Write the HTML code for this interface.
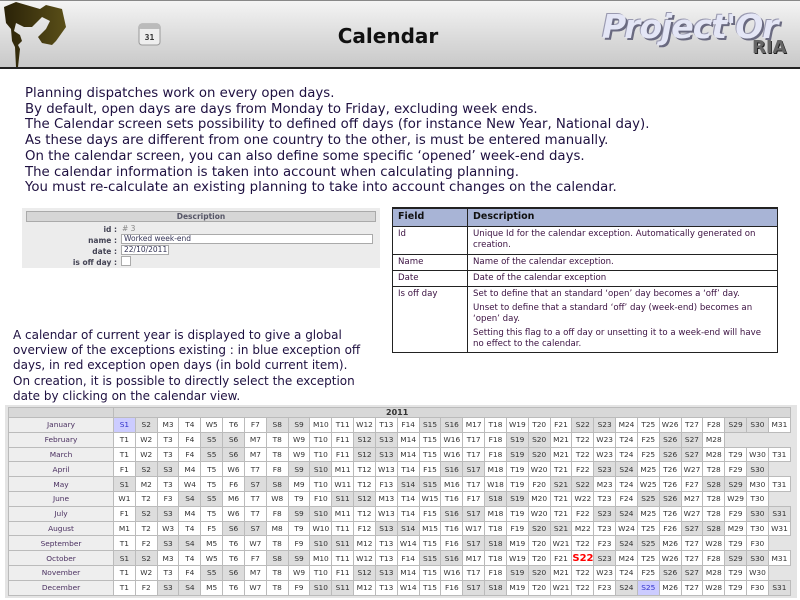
<!DOCTYPE html>
<html><head><meta charset="utf-8"><style>
*{margin:0;padding:0;box-sizing:border-box}
body{width:800px;height:600px;background:#fff;position:relative;overflow:hidden;font-family:"DejaVu Sans","Liberation Sans",sans-serif;color:#1e1040}
#hdr{position:absolute;left:0;top:0;width:800px;height:69px;background:linear-gradient(#f4f4f4,#d9d9d9 60%,#c9c9c9);border-top:1px solid #888;border-bottom:2px solid #222}
#title{position:absolute;left:300px;width:176px;top:23px;text-align:center;font:bold 20px "DejaVu Sans",sans-serif;color:#111}
#logo{position:absolute;left:602px;top:6px;font:italic bold 33px "DejaVu Sans",sans-serif;color:#e4e6f6;text-shadow:2px 2px 0 #6a6a80,-1px -1px 0 #9a9ab0;letter-spacing:-1px}
#ria{position:absolute;left:752px;top:36px;font:bold 18px "DejaVu Sans",sans-serif;color:#666;text-shadow:1px 1px 0 #222}
.p{position:absolute;white-space:pre;font-size:13.3px;line-height:15.7px}
#form{position:absolute;left:22px;top:208px;width:358px;height:60px;background:#ececec}
#form .h{position:absolute;left:4px;top:3px;width:350px;height:11px;background:#d6d6d6;border:1px solid #aaa;font:bold 7.5px "DejaVu Sans",sans-serif;color:#556;text-align:center;line-height:9px}
.lb{position:absolute;left:0;width:95px;font:bold 7.5px "DejaVu Sans",sans-serif;color:#445;text-align:right;white-space:nowrap}
.in{position:absolute;left:99px;height:10px;background:#fff;border:1px solid #aaa;font:7.5px "DejaVu Sans",sans-serif;color:#335;line-height:8px;padding-left:2px}
#ft{position:absolute;left:392px;top:207px;width:386px;border-collapse:collapse;font-size:8.6px;color:#3a1040}
#ft td{border:1px solid #222;vertical-align:top;padding:2px 5px;line-height:11px}
#ft tr.h td{background:#a8b4d6;font-weight:bold;color:#111;height:18px;font-size:9.5px;border-width:2px 1px 1px 1px}
#cal{position:absolute;left:5px;top:405px;width:792px;height:193px;background:#e4e4e4}
#ct{position:absolute;left:3px;top:2px;border-collapse:collapse;table-layout:fixed;width:783px;font-size:7.4px;color:#333}
#ct td{border:1px solid #bbb;height:14.8px;text-align:center;background:#fff;padding:0;white-space:nowrap}
#ct td.m{background:#eee;color:#4a3060;width:105px}
#ct td.w{background:#ddd}
#ct td.b{background:#ccccff;color:#33c}
#ct td.r{color:#f00;font-weight:bold;font-size:10px}
#ct td.e{background:#e4e4e4;border:none}
#ct tr.yh td{height:10px;background:#d8d8d8;font-weight:bold;font-size:8px;text-align:center;color:#333}
</style></head><body>
<div id="hdr">
<svg style="position:absolute;left:2px;top:0" width="68" height="68" viewBox="0 0 68 68"><defs><linearGradient id="g" x1="0" x2="1"><stop offset="0" stop-color="#2a2208"/><stop offset="1" stop-color="#5a4f18"/></linearGradient></defs><path d="M2 6 L14 1 L38 8 L44 4 L60 8 L64 26 L54 40 L50 44 L40 42 L36 36 L44 28 L48 20 L40 16 L34 22 L30 26 L22 26 L14 22 L12 30 L18 34 L20 40 L16 44 L18 48 L16 66 L14 66 L13 46 L10 40 L9 28 L4 22 Z" fill="url(#g)"/></svg>
<svg style="position:absolute;left:138px;top:22px" width="24" height="24" viewBox="0 0 24 24"><rect x="1" y="1" width="21" height="21" rx="3" fill="#eee" stroke="#999"/><rect x="1" y="1" width="21" height="5" rx="2" fill="#bbb"/><text x="11.5" y="17" font-size="8" font-weight="bold" text-anchor="middle" font-family="DejaVu Sans Mono,monospace" fill="#333">31</text></svg>
<div id="title">Calendar</div>
<div id="logo">Project'Or</div><div id="ria">RIA</div>
</div>
<div class="p" style="left:25px;top:86px">Planning dispatches work on every open days.
By default, open days are days from Monday to Friday, excluding week ends.
The Calendar screen sets possibility to defined off days (for instance New Year, National day).
As these days are different from one country to the other, is must be entered manually.
On the calendar screen, you can also define some specific ‘opened’ week-end days.
The calendar information is taken into account when calculating planning.
You must re-calculate an existing planning to take into account changes on the calendar.</div>
<div id="form"><div class="h">Description</div>
<div class="lb" style="top:17px">id :</div><div style="position:absolute;left:100px;top:16px;font-size:7.5px;color:#888"># 3</div>
<div class="lb" style="top:28px">name :</div><div class="in" style="top:26px;width:252px">Worked week-end</div>
<div class="lb" style="top:39px">date :</div><div class="in" style="top:37px;width:48px">22/10/2011</div>
<div class="lb" style="top:50px">is off day :</div><div class="in" style="top:48px;width:10px"></div>
</div>
<table id="ft">
<tr class="h"><td style="width:75px">Field</td><td>Description</td></tr>
<tr><td style="height:28px">Id</td><td>Unique Id for the calendar exception. Automatically generated on creation.</td></tr>
<tr><td>Name</td><td>Name of the calendar exception.</td></tr>
<tr><td>Date</td><td>Date of the calendar exception</td></tr>
<tr><td>Is off day</td><td><div style="margin-bottom:3px">Set to define that an standard ‘open’ day becomes a ‘off’ day.</div><div style="margin-bottom:3px">Unset to define that a standard ‘off’ day (week-end) becomes an ‘open’ day.</div><div>Setting this flag to a off day or unsetting it to a week-end will have no effect to the calendar.</div></td></tr>
</table>
<div class="p" style="left:13px;top:328px;font-size:12px;line-height:15.2px">A calendar of current year is displayed to give a global
overview of the exceptions existing : in blue exception off
days, in red exception open days (in bold current item).
On creation, it is possible to directly select the exception
date by clicking on the calendar view.</div>
<div id="cal"><table id="ct">
<tr class="yh"><td class="m" style="background:#d8d8d8;border-right:none"></td><td colspan="31" style="text-align:left;padding-left:272px">2011</td></tr>
<tr><td class="m">January</td><td class="b">S1</td><td class="w">S2</td><td>M3</td><td>T4</td><td>W5</td><td>T6</td><td>F7</td><td class="w">S8</td><td class="w">S9</td><td>M10</td><td>T11</td><td>W12</td><td>T13</td><td>F14</td><td class="w">S15</td><td class="w">S16</td><td>M17</td><td>T18</td><td>W19</td><td>T20</td><td>F21</td><td class="w">S22</td><td class="w">S23</td><td>M24</td><td>T25</td><td>W26</td><td>T27</td><td>F28</td><td class="w">S29</td><td class="w">S30</td><td>M31</td></tr>
<tr><td class="m">February</td><td>T1</td><td>W2</td><td>T3</td><td>F4</td><td class="w">S5</td><td class="w">S6</td><td>M7</td><td>T8</td><td>W9</td><td>T10</td><td>F11</td><td class="w">S12</td><td class="w">S13</td><td>M14</td><td>T15</td><td>W16</td><td>T17</td><td>F18</td><td class="w">S19</td><td class="w">S20</td><td>M21</td><td>T22</td><td>W23</td><td>T24</td><td>F25</td><td class="w">S26</td><td class="w">S27</td><td>M28</td><td class="e"></td><td class="e"></td><td class="e"></td></tr>
<tr><td class="m">March</td><td>T1</td><td>W2</td><td>T3</td><td>F4</td><td class="w">S5</td><td class="w">S6</td><td>M7</td><td>T8</td><td>W9</td><td>T10</td><td>F11</td><td class="w">S12</td><td class="w">S13</td><td>M14</td><td>T15</td><td>W16</td><td>T17</td><td>F18</td><td class="w">S19</td><td class="w">S20</td><td>M21</td><td>T22</td><td>W23</td><td>T24</td><td>F25</td><td class="w">S26</td><td class="w">S27</td><td>M28</td><td>T29</td><td>W30</td><td>T31</td></tr>
<tr><td class="m">April</td><td>F1</td><td class="w">S2</td><td class="w">S3</td><td>M4</td><td>T5</td><td>W6</td><td>T7</td><td>F8</td><td class="w">S9</td><td class="w">S10</td><td>M11</td><td>T12</td><td>W13</td><td>T14</td><td>F15</td><td class="w">S16</td><td class="w">S17</td><td>M18</td><td>T19</td><td>W20</td><td>T21</td><td>F22</td><td class="w">S23</td><td class="w">S24</td><td>M25</td><td>T26</td><td>W27</td><td>T28</td><td>F29</td><td class="w">S30</td><td class="e"></td></tr>
<tr><td class="m">May</td><td class="w">S1</td><td>M2</td><td>T3</td><td>W4</td><td>T5</td><td>F6</td><td class="w">S7</td><td class="w">S8</td><td>M9</td><td>T10</td><td>W11</td><td>T12</td><td>F13</td><td class="w">S14</td><td class="w">S15</td><td>M16</td><td>T17</td><td>W18</td><td>T19</td><td>F20</td><td class="w">S21</td><td class="w">S22</td><td>M23</td><td>T24</td><td>W25</td><td>T26</td><td>F27</td><td class="w">S28</td><td class="w">S29</td><td>M30</td><td>T31</td></tr>
<tr><td class="m">June</td><td>W1</td><td>T2</td><td>F3</td><td class="w">S4</td><td class="w">S5</td><td>M6</td><td>T7</td><td>W8</td><td>T9</td><td>F10</td><td class="w">S11</td><td class="w">S12</td><td>M13</td><td>T14</td><td>W15</td><td>T16</td><td>F17</td><td class="w">S18</td><td class="w">S19</td><td>M20</td><td>T21</td><td>W22</td><td>T23</td><td>F24</td><td class="w">S25</td><td class="w">S26</td><td>M27</td><td>T28</td><td>W29</td><td>T30</td><td class="e"></td></tr>
<tr><td class="m">July</td><td>F1</td><td class="w">S2</td><td class="w">S3</td><td>M4</td><td>T5</td><td>W6</td><td>T7</td><td>F8</td><td class="w">S9</td><td class="w">S10</td><td>M11</td><td>T12</td><td>W13</td><td>T14</td><td>F15</td><td class="w">S16</td><td class="w">S17</td><td>M18</td><td>T19</td><td>W20</td><td>T21</td><td>F22</td><td class="w">S23</td><td class="w">S24</td><td>M25</td><td>T26</td><td>W27</td><td>T28</td><td>F29</td><td class="w">S30</td><td class="w">S31</td></tr>
<tr><td class="m">August</td><td>M1</td><td>T2</td><td>W3</td><td>T4</td><td>F5</td><td class="w">S6</td><td class="w">S7</td><td>M8</td><td>T9</td><td>W10</td><td>T11</td><td>F12</td><td class="w">S13</td><td class="w">S14</td><td>M15</td><td>T16</td><td>W17</td><td>T18</td><td>F19</td><td class="w">S20</td><td class="w">S21</td><td>M22</td><td>T23</td><td>W24</td><td>T25</td><td>F26</td><td class="w">S27</td><td class="w">S28</td><td>M29</td><td>T30</td><td>W31</td></tr>
<tr><td class="m">September</td><td>T1</td><td>F2</td><td class="w">S3</td><td class="w">S4</td><td>M5</td><td>T6</td><td>W7</td><td>T8</td><td>F9</td><td class="w">S10</td><td class="w">S11</td><td>M12</td><td>T13</td><td>W14</td><td>T15</td><td>F16</td><td class="w">S17</td><td class="w">S18</td><td>M19</td><td>T20</td><td>W21</td><td>T22</td><td>F23</td><td class="w">S24</td><td class="w">S25</td><td>M26</td><td>T27</td><td>W28</td><td>T29</td><td>F30</td><td class="e"></td></tr>
<tr><td class="m">October</td><td class="w">S1</td><td class="w">S2</td><td>M3</td><td>T4</td><td>W5</td><td>T6</td><td>F7</td><td class="w">S8</td><td class="w">S9</td><td>M10</td><td>T11</td><td>W12</td><td>T13</td><td>F14</td><td class="w">S15</td><td class="w">S16</td><td>M17</td><td>T18</td><td>W19</td><td>T20</td><td>F21</td><td class="r">S22</td><td class="w">S23</td><td>M24</td><td>T25</td><td>W26</td><td>T27</td><td>F28</td><td class="w">S29</td><td class="w">S30</td><td>M31</td></tr>
<tr><td class="m">November</td><td>T1</td><td>W2</td><td>T3</td><td>F4</td><td class="w">S5</td><td class="w">S6</td><td>M7</td><td>T8</td><td>W9</td><td>T10</td><td>F11</td><td class="w">S12</td><td class="w">S13</td><td>M14</td><td>T15</td><td>W16</td><td>T17</td><td>F18</td><td class="w">S19</td><td class="w">S20</td><td>M21</td><td>T22</td><td>W23</td><td>T24</td><td>F25</td><td class="w">S26</td><td class="w">S27</td><td>M28</td><td>T29</td><td>W30</td><td class="e"></td></tr>
<tr><td class="m">December</td><td>T1</td><td>F2</td><td class="w">S3</td><td class="w">S4</td><td>M5</td><td>T6</td><td>W7</td><td>T8</td><td>F9</td><td class="w">S10</td><td class="w">S11</td><td>M12</td><td>T13</td><td>W14</td><td>T15</td><td>F16</td><td class="w">S17</td><td class="w">S18</td><td>M19</td><td>T20</td><td>W21</td><td>T22</td><td>F23</td><td class="w">S24</td><td class="b">S25</td><td>M26</td><td>T27</td><td>W28</td><td>T29</td><td>F30</td><td class="w">S31</td></tr>
</table></div>
</body></html>
